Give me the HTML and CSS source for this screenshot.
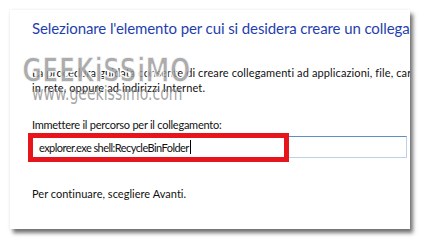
FILE: index.html
```html
<!DOCTYPE html>
<html lang="it">
<head>
<meta charset="utf-8">
<link rel="stylesheet" href="styles.css">
</head>
<body>
<div class="panel">
  <h1 class="title">Selezionare l'elemento per cui si desidera creare un collegamento</h1>
  <p class="desc">La procedura guidata consente di creare collegamenti ad applicazioni, file, cartelle, computer<br>in rete, oppure ad indirizzi Internet.</p>
  <label class="label">Immettere il percorso per il collegamento:</label>
  <div class="field"><span class="value">explorer.exe shell:RecycleBinFolder</span><span class="caret"></span></div>
  <p class="hint">Per continuare, scegliere Avanti.</p>
  <div class="highlight"></div>
  <div class="watermark">
    <div class="wm-logo">GEEKiSSiMO</div>
    <div class="wm-url">www.geekissimo.com</div>
  </div>
</div>
</body>
</html>
```
FILE: styles.css
```css
html, body {
  margin: 0;
  padding: 0;
  background: #ffffff;
}
body {
  width: 421px;
  height: 242px;
  overflow: hidden;
  font-family: "Lato", "Noto Sans", sans-serif;
}
.panel {
  position: relative;
  margin: 10px 0 0 10px;
  width: 400px;
  height: 219px;
  background: #ffffff;
  box-shadow: 3px 4px 4px rgba(0,0,0,0.55), 0 0 3px rgba(0,0,0,0.08);
  overflow: hidden;
  padding-left: 22px;
  box-sizing: border-box;
  display: flex;
  flex-direction: column;
  align-items: flex-start;
}
.title {
  margin: 8px 0 0;
  font-weight: normal;
  font-size: 15px;
  letter-spacing: -0.1px;
  line-height: 20px;
  color: #1f3fae;
  white-space: nowrap;
}
.desc, .label, .field, .hint {
  font-size: 11px;
  color: #111;
}
.desc {
  margin: 27px 0 0;
  line-height: 15px;
  letter-spacing: 0.12px;
  white-space: nowrap;
}
.label {
  margin-top: 21.5px;
  line-height: 15px;
  letter-spacing: -0.25px;
  white-space: nowrap;
}
.field {
  margin: 4.5px 0 0 -2px;
  width: 377px;
  height: 22px;
  box-sizing: border-box;
  border: 1px solid #b9d1ea;
  border-top-color: #5a8fc8;
  display: flex;
  align-items: center;
  padding-left: 8px;
  letter-spacing: -0.55px;
}
.caret {
  width: 1px;
  height: 14px;
  background: #000;
  margin-left: 1px;
}
.hint {
  margin: 27.5px 0 0;
  line-height: 15px;
  letter-spacing: 0.03px;
}
.highlight {
  position: absolute;
  left: 18px;
  top: 123px;
  width: 261px;
  height: 29px;
  box-sizing: border-box;
  border: 5px solid #e8141c;
}
.watermark {
  position: absolute;
  left: 12px;
  top: 45px;
  pointer-events: none;
}
.wm-logo {
  font-family: "Liberation Sans Narrow", "DejaVu Sans Condensed", sans-serif;
  font-weight: bold;
  font-size: 34px;
  line-height: 30px;
  color: rgba(150,150,150,0.8);
  -webkit-text-stroke: 1.5px rgba(255,255,255,0.9);
  transform: scaleX(0.8);
  transform-origin: left top;
  white-space: nowrap;
}
.wm-url {
  margin: -2px 0 0 10px;
  font-family: "Liberation Sans Narrow", "DejaVu Sans Condensed", sans-serif;
  font-size: 19px;
  line-height: 20px;
  color: rgba(140,140,140,0.8);
  transform: scaleX(0.82);
  transform-origin: left top;
  white-space: nowrap;
}
```
